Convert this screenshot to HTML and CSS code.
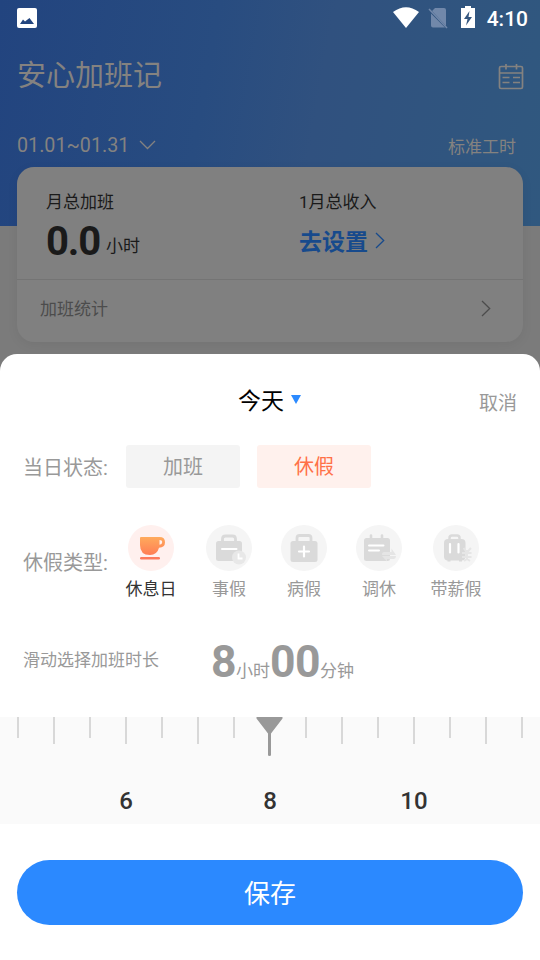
FILE: index.html
```html
<!DOCTYPE html>
<html lang="zh-CN">
<head>
<meta charset="utf-8">
<title>安心加班记</title>
<link rel="stylesheet" href="styles.css">
</head>
<body>
<header class="hero">
  <div class="status">
    <svg class="status-photo" width="20" height="20" viewBox="0 0 20 20"><rect width="20" height="20" rx="2" fill="#fff"/><path d="M3 16l3-4.500 2 2L12.500 10l4.500 6z" fill="#23457f"/></svg>
    <svg width="26" height="21" viewBox="0 0 26 21"><path d="M0 5Q13-4.500 26 5L13 21z" fill="#fff"/></svg>
    <svg class="status-sim" width="20" height="22" viewBox="0 0 20 22"><path d="M7 1h9q2 0 2 2v16L4 4zM3 6.500l14 14H5q-2 0-2-2z" fill="#7188aa"/><path d="M1 2l18 19" stroke="#7188aa" stroke-width="1.500"/></svg>
    <svg class="status-battery" width="14" height="22" viewBox="0 0 14 22"><path d="M0 2h4V0h6v2h4v20H0z" fill="#fff"/><path d="M8.500 5L3 13h3.500L5 19.500 11 11H7.500z" fill="#34567f"/></svg>
    <span class="clock">4:10</span>
  </div>
  <div class="title-row">
    <h1 class="title">安心加班记</h1>
    <svg width="26" height="26" viewBox="0 0 26 26" fill="none" stroke="#848280" stroke-width="1.700"><rect x="1.500" y="2.500" width="23" height="22" rx="1.500"/><path d="M1.500 9h23M8 0v5.500M18.500 0v5.500M4.500 13.500h7M15 13.500h7M4.500 18.500h7M15 18.500h7"/></svg>
  </div>
  <div class="period-row">
    <span class="period">01.01~01.31</span>
    <svg width="17" height="10" viewBox="0 0 17 10" fill="none" stroke="#848280" stroke-width="1.300"><path d="M1 1l7.500 7.500L16 1"/></svg>
    <span class="mode">标准工时</span>
  </div>
</header>

<section class="card">
  <div class="totals">
    <div class="total">
      <div class="total-label">月总加班</div>
      <div class="total-value"><span class="hours">0.0</span><span class="unit">小时</span></div>
    </div>
    <div class="total">
      <div class="total-label">1月总收入</div>
      <div class="total-value total-income"><span class="set-link">去设置</span><svg width="10" height="17" viewBox="0 0 10 17" fill="none" stroke="#174a8c" stroke-width="1.300"><path d="M1 1l7.700 7.500L1 16"/></svg></div>
    </div>
  </div>
  <div class="stats">
    <span>加班统计</span>
    <svg width="10" height="17" viewBox="0 0 10 17" fill="none" stroke="#4c4c4c" stroke-width="1.300"><path d="M1 1l7.700 7.500L1 16"/></svg>
  </div>
</section>

<main class="sheet">
  <div class="sheet-head">
    <span class="day">今天</span>
    <svg width="10" height="9" viewBox="0 0 10 9"><path d="M0 0h10L5 9z" fill="#2b8aff"/></svg>
    <span class="cancel">取消</span>
  </div>

  <div class="state-row">
    <span class="field">当日状态:</span>
    <button class="state">加班</button>
    <button class="state state-on">休假</button>
  </div>

  <div class="type-row">
    <span class="field">休假类型:</span>
    <div class="types">
      <div class="type type-on">
        <svg width="46" height="46" viewBox="0 0 46 46">
          <defs><linearGradient id="cup" x1="0" y1="0" x2="0" y2="1"><stop offset="0" stop-color="#ffaa5c"/><stop offset="1" stop-color="#ff7d55"/></linearGradient></defs>
          <circle cx="23" cy="23" r="23" fill="#fff0ee"/>
          <path fill-rule="evenodd" d="M13 12h18.500q5.500 0 5.500 5.200T31 22.700Q29 30 22 30q-10 0-10-10v-7q0-1 1-1zm18.500 3v4.800q2.700-.2 2.700-2.500T31.500 15z" fill="url(#cup)"/>
          <rect x="12" y="32" width="20" height="2.400" rx="1.200" fill="#fc7a5c"/>
        </svg>
        <span>休息日</span>
      </div>
      <div class="type">
        <svg width="46" height="46" viewBox="0 0 46 46">
          <circle cx="23" cy="23" r="23" fill="#f5f5f5"/>
          <path d="M16.500 17v-3q0-3 3-3h7q3 0 3 3v3" fill="none" stroke="#dadada" stroke-width="2.800"/>
          <rect x="10" y="16" width="26" height="20" rx="2.500" fill="#dadada"/>
          <path d="M16 24h14.500" stroke="#fff" stroke-width="2" stroke-linecap="round"/>
          <circle cx="33" cy="32.500" r="7" fill="#e8e8e8"/>
          <path d="M32.500 28.500v5h4" fill="none" stroke="#fff" stroke-width="1.800"/>
        </svg>
        <span>事假</span>
      </div>
      <div class="type">
        <svg width="46" height="46" viewBox="0 0 46 46">
          <circle cx="23" cy="23" r="23" fill="#f5f5f5"/>
          <path d="M16 17v-4q0-2.500 2.500-2.500h9q2.500 0 2.500 2.500v4" fill="none" stroke="#dadada" stroke-width="2.800"/>
          <rect x="9.500" y="16" width="27" height="21" rx="2.500" fill="#dadada"/>
          <path d="M18 26.500h10M23 21.500v10" stroke="#fff" stroke-width="2.200" stroke-linecap="round"/>
        </svg>
        <span>病假</span>
      </div>
      <div class="type">
        <svg width="46" height="46" viewBox="0 0 46 46">
          <circle cx="23" cy="23" r="23" fill="#f5f5f5"/>
          <rect x="8" y="13" width="26" height="23" rx="2.500" fill="#dadada"/>
          <path d="M15 10.500v5M26 10.500v5" stroke="#dadada" stroke-width="2.600" stroke-linecap="round"/>
          <path d="M13 20.500h14.500M13 25.500h10" stroke="#fff" stroke-width="2" stroke-linecap="round"/>
          <path d="M26 30h14l-4.500-6.500v3.500H28q-2 0-2 3zM40 31H26l5 5.500V34h7q2-.5 2-3z" fill="#e5e5e5"/>
        </svg>
        <span>调休</span>
      </div>
      <div class="type">
        <svg width="46" height="46" viewBox="0 0 46 46">
          <circle cx="23" cy="23" r="23" fill="#f5f5f5"/>
          <path d="M16.500 14v-1q0-2.500 2.500-2.500h5q2.500 0 2.500 2.500v1" fill="none" stroke="#dadada" stroke-width="2.500"/>
          <rect x="11" y="14" width="21.500" height="21.500" rx="4" fill="#dadada"/>
          <path d="M16 34v2.500M27.500 34v2.500" stroke="#dadada" stroke-width="3"/>
          <path d="M17 19v8.500M25.500 19v8.500" stroke="#fff" stroke-width="2.200" stroke-linecap="round"/>
          <path d="M34 25v10M29 28h9.500M29 32h9.500M30.500 23l3.500 4.500 4-4.500M31 36l3-2 3 2" fill="none" stroke="#e6e6e6" stroke-width="2"/>
        </svg>
        <span>带薪假</span>
      </div>
    </div>
  </div>

  <div class="duration-row">
    <span class="duration-label">滑动选择加班时长</span>
    <span class="duration"><b>8</b>小时<b>00</b>分钟</span>
  </div>

  <div class="ruler">
    <svg width="540" height="42" viewBox="0 0 540 42">
      <path d="M18 0v21M90 0v21M162 0v21M234 0v21M306 0v21M378 0v21M450 0v21M522 0v21M54 0v27M126 0v27M198 0v27M342 0v27M414 0v27M486 0v27" stroke="#d8d8d8" stroke-width="2"/>
      <path d="M256.500 0h26v1.500L271 16.500V38q0 1-1.500 1T268 38V16.500L256.500 1.500z" fill="#999"/>
    </svg>
    <div class="marks"><span>6</span><span>8</span><span>10</span></div>
  </div>

  <button class="save">保存</button>
</main>
</body>
</html>
```
FILE: styles.css
```css
* { box-sizing: border-box; }
body {
  margin: 0;
  width: 540px;
  height: 960px;
  overflow: hidden;
  background: #7b7b7b;
  font-family: Roboto, "Noto Sans CJK SC", sans-serif;
}
svg { display: block; flex: none; }
button { border: 0; padding: 0; font-family: inherit; }

.hero {
  height: 226px;
  background: linear-gradient(100deg, #22447f 0%, #284c80 38%, #30517f 58%, #30587f 100%);
  color: #848280;
}
.status {
  display: flex;
  align-items: center;
  height: 35px;
  padding: 0 12px 0 17px;
}
.status-photo { margin-right: auto; }
.status-sim { margin-left: 9px; }
.status-battery { margin: 0 12px 1px 13px; }
.clock { padding-top: 3px; color: #fff; font-size: 21px; font-weight: 500; line-height: 32px; }

.title-row {
  display: flex;
  align-items: center;
  justify-content: space-between;
  height: 84px;
  padding: 0 16px 0 17px;
}
.title { margin: 0; font-size: 29px; font-weight: 400; line-height: 40px; padding-bottom: 2px; }
.period-row {
  display: flex;
  align-items: center;
  height: 52px;
  padding: 0 24px 0 17px;
}
.period { font-size: 19.700px; margin-right: 10px; }
.mode { margin-left: auto; font-size: 17px; padding-top: 1px; }

.card {
  height: 175px;
  margin: -59px 17px 12px;
  border-radius: 17px;
  background: #808080;
  box-shadow: 0 3px 12px rgba(0, 0, 0, 0.060);
}
.totals {
  display: grid;
  grid-template-columns: 253px 1fr;
  height: 113px;
  padding: 23px 0 0 29px;
  border-bottom: 1px solid #747474;
}
.total-label { height: 24px; line-height: 24px; font-size: 17px; color: #1a1a1a; }
.total-value { display: flex; align-items: center; height: 54px; color: #1a1a1a; }
.total-income { height: 52px; }
.hours { font-size: 40px; font-weight: 700; letter-spacing: -1.200px; }
.unit { margin: 6px 0 0 6px; font-size: 17px; }
.set-link { margin-right: 7px; font-size: 23px; font-weight: 700; color: #174a8c; }
.stats {
  display: flex;
  align-items: center;
  justify-content: space-between;
  height: 57px;
  padding: 0 32px 0 23px;
  font-size: 17px;
  color: #4c4c4c;
}
.stats span { padding-bottom: 2px; }

.sheet {
  height: 606px;
  border-radius: 17px 17px 0 0;
  background: #fff;
  color: #999;
}
.sheet-head {
  display: grid;
  grid-template-columns: 53px 1fr auto;
  align-items: center;
  height: 91px;
  padding: 0 23px 0 238px;
}
.day { padding-bottom: 2px; font-size: 23px; color: #000; }
.cancel { padding-top: 4px; font-size: 19px; }
.field { width: 103px; font-size: 20px; }
.state-row { display: flex; align-items: center; height: 43px; padding-left: 23px; }
.state-row .field { padding-bottom: 1px; }
.state {
  width: 114px;
  height: 43px;
  margin-right: 17px;
  padding-bottom: 2px;
  border-radius: 3px;
  background: #f4f4f4;
  color: #999;
  font-size: 20px;
}
.state-on { background: #fff1ed; color: #ff7148; }

.type-row { display: flex; align-items: center; height: 80px; margin-top: 37px; padding-left: 23px; }
.type-row .field { width: 90px; padding-bottom: 7px; }
.types { display: grid; grid-template-columns: 76px 80px 70px 80px 74px; }
.type { display: flex; flex-direction: column; align-items: center; font-size: 17px; line-height: 32px; }
.type span { padding-top: 2px; }
.type-on { color: #333; }

.duration-row { display: flex; height: 112px; padding: 29px 0 0 23px; }
.duration-label { width: 188px; padding-top: 14px; font-size: 17px; line-height: 24px; }
.duration { font-size: 17px; line-height: 56px; }
.duration b { font-size: 44.500px; font-weight: 700; letter-spacing: -0.500px; }

.ruler { height: 107px; background: #fafafa; }
.marks {
  display: grid;
  grid-template-columns: repeat(3, 144px);
  padding: 28px 0 0 54px;
  text-align: center;
  font-size: 24px;
  font-weight: 500;
  line-height: 28px;
  color: #333;
}
.save {
  display: block;
  width: 506px;
  height: 65px;
  margin: 36px 17px 0;
  padding-bottom: 3px;
  border-radius: 33px;
  background: #2b89ff;
  color: #fff;
  font-size: 26px;
}
```
